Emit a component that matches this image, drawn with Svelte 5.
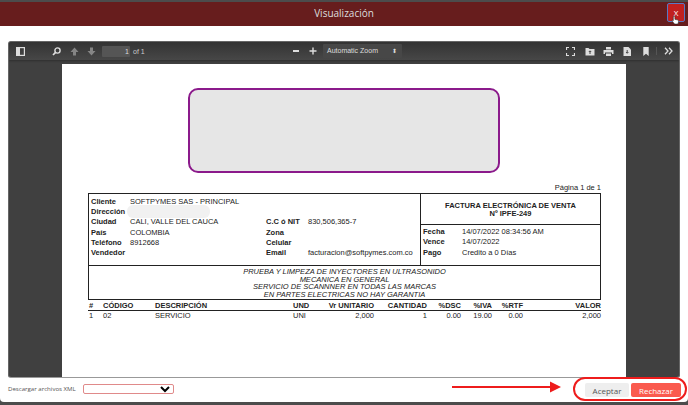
<script lang="ts">
  // Invoice preview dialog: PDF viewer with footer actions.
  const client = [
    ['Cliente', 'SOFTPYMES SAS - PRINCIPAL', '', ''],
    ['Dirección', '', '', ''],
    ['Ciudad', 'CALI, VALLE DEL CAUCA', 'C.C ó NIT', '830,506,365-7'],
    ['País', 'COLOMBIA', 'Zona', ''],
    ['Teléfono', '8912668', 'Celular', ''],
    ['Vendedor', '', 'Email', 'facturacion@softpymes.com.co'],
  ];
  const dates = [
    ['Fecha', '14/07/2022 08:34:56 AM'],
    ['Vence', '14/07/2022'],
    ['Pago', 'Credito a 0 Días'],
  ];
  const notes = [
    'PRUEBA Y LIMPEZA DE INYECTORES EN ULTRASONIDO',
    'MECANICA EN GENERAL',
    'SERVICIO DE SCANNNER EN TODAS LAS MARCAS',
    'EN PARTES ELECTRICAS NO HAY GARANTIA',
  ];
  const columns = ['#', 'CÓDIGO', 'DESCRIPCIÓN', 'UND', 'Vr UNITARIO', 'CANTIDAD', '%DSC', '%IVA', '%RTF', 'VALOR'];
  const item = ['1', '02', 'SERVICIO', 'UNI', '2,000', '1', '0.00', '19.00', '0.00', '2,000'];
</script>

<div class="dialog">
  <header class="title-bar">
    <span class="title">Visualización</span>
    <button type="button" class="close">X</button>
    <svg class="cursor" width="9" height="10" viewBox="0 0 12 14">
      <path d="M4 1.5c.8 0 1.200.5 1.200 1.200v3.400l3.600.7c1 .2 1.600.9 1.500 1.900l-.4 2.600c-.1.8-.7 1.400-1.500 1.400H5.500c-.6 0-1-.3-1.400-.8L1.400 8.600c-.4-.6.3-1.400 1-1l.5.4V2.700c0-.7.4-1.200 1.100-1.200z" fill="#fff" stroke="#222" stroke-width="0.8" />
    </svg>
  </header>

  <section class="viewer">
    <div class="toolbar">
      <svg class="icon sidebar" width="9" height="9" viewBox="0 0 9 9">
        <rect x="0.6" y="0.6" width="7.800" height="7.800" fill="none" stroke="#ddd" stroke-width="1.200" />
        <rect x="1" y="1" width="3" height="7" fill="#ddd" />
      </svg>
      <svg class="icon search" width="9" height="9" viewBox="0 0 9 9">
        <circle cx="5.500" cy="3.500" r="2.600" fill="none" stroke="#ddd" stroke-width="1.400" />
        <path d="M3.600 5.400 1 8" stroke="#ddd" stroke-width="1.700" />
      </svg>
      <svg class="icon up" width="9" height="9" viewBox="0 0 9 9"><path d="M4.500.5 8.500 5H6v3.500H3V5H.5z" fill="#858585" /></svg>
      <svg class="icon down" width="9" height="9" viewBox="0 0 9 9"><path d="M4.500 8.500 8.500 4H6V.5H3V4H.5z" fill="#858585" /></svg>
      <span class="page-input">1</span>
      <span class="page-total">of 1</span>
      <span class="zoom-minus"></span>
      <svg class="icon plus" width="8" height="8" viewBox="0 0 8 8"><path d="M4 .5v7M.5 4h7" stroke="#ddd" stroke-width="1.400" /></svg>
      <span class="zoom-select">Automatic Zoom<i>⬍</i></span>
      <svg class="icon fullscreen" width="9" height="9" viewBox="0 0 9 9">
        <path d="M.5 3V.5H3M6 .5h2.500V3M8.500 6v2.500H6M3 8.500H.5V6" fill="none" stroke="#ddd" stroke-width="1.200" />
      </svg>
      <svg class="icon open" width="10" height="9" viewBox="0 0 10 9">
        <path d="M.5 1h3l1 1h5v6.500H.5z" fill="#ddd" /><path d="M5 7V4M3.800 5 5 3.800 6.200 5" stroke="#444" fill="none" />
      </svg>
      <svg class="icon print" width="11" height="9" viewBox="0 0 11 9">
        <path d="M3 0h5v2.500H3zM.5 3h10v4H9V5.500H2V7H.5zM3 6.500h5V9H3z" fill="#ddd" />
      </svg>
      <svg class="icon save" width="8" height="9" viewBox="0 0 8 9">
        <path d="M.5 0h5L8 2.500V9H.5z" fill="#ddd" /><path d="M4.200 3v3M3 5l1.200 1.300L5.400 5" stroke="#444" fill="none" />
      </svg>
      <svg class="icon bookmark" width="6" height="9" viewBox="0 0 6 9"><path d="M.3 0h5.400v9L3 6.800.3 9z" fill="#ddd" /></svg>
      <span class="tool-sep"></span>
      <svg class="icon more" width="9" height="8" viewBox="0 0 9 8">
        <path d="M1 .8 4 4 1 7.200M5 .8 8 4 5 7.200" fill="none" stroke="#ddd" stroke-width="1.300" />
      </svg>
    </div>

    <div class="canvas">
      <article class="page">
        <div class="logo-box"></div>
        <div class="page-count">Página 1 de 1</div>

        <div class="invoice-box">
          <div class="client-grid">
            {#each client as row}
              <b>{row[0]}</b><span>{row[1]}</span><b>{row[2]}</b><span>{row[3]}</span>
            {/each}
            <span class="redacted"></span>
          </div>
          <div class="doc-side">
            <div class="doc-title">FACTURA ELECTRÓNICA DE VENTA<br />Nº IPFE-249</div>
            <div class="doc-dates">
              {#each dates as row}
                <b>{row[0]}</b><span>{row[1]}</span>
              {/each}
            </div>
          </div>
          <div class="notes">
            {#each notes as line}<div>{line}</div>{/each}
          </div>
        </div>

        <div class="items heads">
          {#each columns as col}<b>{col}</b>{/each}
        </div>
        <div class="items">
          {#each item as cell}<span>{cell}</span>{/each}
        </div>
      </article>
    </div>
  </section>

  <footer class="actions">
    <label class="xml">
      <span>Descargar archivos XML</span>
      <select aria-label="Descargar archivos XML"></select>
    </label>
    <div class="buttons">
      <button type="button" class="accept">Aceptar</button>
      <button type="button" class="reject">Rechazar</button>
    </div>
    <svg class="arrow" width="110" height="12" viewBox="0 0 110 12">
      <path d="M0 6h100" stroke="#ee1c1c" stroke-width="2" /><path d="M98 0.500 109 6 98 11.500z" fill="#ee1c1c" />
    </svg>
    <span class="ring"></span>
  </footer>
</div>

<style>
  :global(body) {
    margin: 0;
    background: #4c4c4c;
  }
  .dialog {
    display: flex;
    flex-direction: column;
    width: 688px;
    height: 400px;
    margin-top: 2px;
    overflow: hidden;
    background: #fff;
    border-radius: 0 0 4px 4px;
    font-family: "Open Sans", sans-serif;
  }
  .title-bar {
    position: relative;
    display: flex;
    align-items: center;
    justify-content: center;
    flex: none;
    height: 24px;
    background: #671d1d;
  }
  .title {
    margin-bottom: 2px;
    font-size: 10px;
    color: #ddd;
  }
  .close {
    position: absolute;
    top: 1px;
    right: 3px;
    width: 18px;
    height: 19px;
    padding: 0;
    font: 8px "Open Sans", sans-serif;
    color: #fff;
    background: #c0201f;
    border: 1px solid #5878c4;
    border-radius: 2px;
  }
  .cursor {
    position: absolute;
    top: 13px;
    right: 8px;
  }
  .viewer {
    display: flex;
    flex-direction: column;
    flex: none;
    height: 337px;
    margin: 15px 8px 0;
    overflow: hidden;
    background: #404040;
    border: 1px solid #666;
    border-bottom-color: #999;
    border-radius: 3px;
    box-sizing: border-box;
  }
  .toolbar {
    display: flex;
    align-items: center;
    flex: none;
    height: 18px;
    padding-left: 7px;
    background: linear-gradient(#333, #474747);
    box-shadow: 0 1px 2px rgba(0, 0, 0, 0.3);
    font-family: "Liberation Sans", sans-serif;
    white-space: nowrap;
    color: #ccc;
  }
  .toolbar > * {
    flex: none;
  }
  .search {
    margin-left: 27px;
  }
  .up {
    margin-left: 9px;
  }
  .down {
    margin-left: 8px;
  }
  .page-input {
    width: 28px;
    height: 11px;
    margin-left: 6px;
    padding-right: 1px;
    font-size: 7px;
    line-height: 11px;
    text-align: right;
    color: #ddd;
    background: #555;
    border-radius: 1px;
    box-sizing: border-box;
  }
  .page-total {
    width: 11px;
    margin-left: 3px;
    font-size: 7px;
  }
  .zoom-minus {
    width: 6px;
    height: 1.500px;
    margin-left: 149px;
    background: #ddd;
  }
  .plus {
    margin-left: 10px;
  }
  .zoom-select {
    display: flex;
    justify-content: space-between;
    width: 79px;
    height: 14px;
    margin-left: 6px;
    padding: 0 5px 0 4px;
    font-size: 7px;
    line-height: 14px;
    color: #ddd;
    background: #474747;
    border-radius: 1px;
    box-sizing: border-box;
  }
  .zoom-select i {
    font-style: normal;
    font-size: 6px;
  }
  .fullscreen {
    margin-left: 164px;
  }
  .open {
    margin-left: 10px;
  }
  .print {
    margin-left: 8px;
  }
  .save {
    margin-left: 9px;
  }
  .bookmark {
    margin-left: 12px;
  }
  .tool-sep {
    width: 1px;
    height: 8px;
    margin-left: 7px;
    background: #555;
  }
  .more {
    margin-left: 7px;
  }
  .canvas {
    flex: 1;
    min-height: 0;
    padding: 4px 53px 0;
    overflow: hidden;
  }
  .page {
    height: 100%;
    padding: 24px 25px 0 26px;
    background: #fff;
    font-family: "Liberation Sans", sans-serif;
    font-size: 7.500px;
    color: #222;
    box-sizing: border-box;
  }
  .logo-box {
    width: 312px;
    height: 85px;
    margin-left: 100px;
    background: #e6e6e6;
    border: 2px solid #8b1a8b;
    border-radius: 10px;
    box-sizing: border-box;
  }
  .page-count {
    margin-top: 10px;
    line-height: 10px;
    text-align: right;
  }
  .invoice-box {
    display: grid;
    grid-template-columns: 332px 1fr;
    border: 1px solid #222;
  }
  .client-grid {
    position: relative;
    display: grid;
    grid-template-columns: 39px 136px 42px 1fr;
    grid-auto-rows: 10.300px;
    align-items: center;
    height: 72px;
    padding: 2px 0 0 2px;
    white-space: nowrap;
    border-right: 1px solid #222;
    border-bottom: 1px solid #222;
    box-sizing: border-box;
  }
  .redacted {
    position: absolute;
    top: 11px;
    left: 38px;
    width: 83px;
    height: 13px;
    background: #f1f1f1;
    border-radius: 6px;
  }
  .doc-side {
    display: flex;
    flex-direction: column;
    border-bottom: 1px solid #222;
  }
  .doc-title {
    height: 31px;
    padding-top: 8px;
    font-weight: bold;
    line-height: 8px;
    text-align: center;
    border-bottom: 1px solid #222;
    box-sizing: border-box;
  }
  .doc-dates {
    display: grid;
    grid-template-columns: 39px 1fr;
    grid-auto-rows: 10.500px;
    align-items: center;
    padding: 1px 0 0 2px;
  }
  .notes {
    grid-column: 1 / -1;
    height: 33px;
    padding-top: 2px;
    font-style: italic;
    line-height: 7.500px;
    text-align: center;
    box-sizing: border-box;
  }
  .items {
    display: grid;
    grid-template-columns: 14px 52px 138px 33px 48px 53px 34px 31px 31px 1fr;
    padding-left: 1px;
    line-height: 8px;
    white-space: nowrap;
  }
  .items > :nth-child(n + 5) {
    text-align: right;
  }
  .heads {
    margin-top: 2px;
    margin-bottom: 1px;
    border-bottom: 1px solid #222;
  }
  .actions {
    position: relative;
    display: flex;
    align-items: center;
    flex: none;
    height: 22px;
    padding: 2px 7px 0 8px;
    box-sizing: border-box;
  }
  .xml {
    display: flex;
    align-items: center;
    gap: 7px;
    margin-bottom: 3px;
    font-size: 6.100px;
    color: #555;
  }
  select {
    width: 91px;
    height: 10px;
    padding: 0;
    background: #fff;
    border: 1px solid #e08a8a;
    border-radius: 2px;
    box-sizing: border-box;
  }
  .buttons {
    display: flex;
    gap: 2px;
    margin-left: auto;
  }
  .buttons button {
    height: 14px;
    padding: 0;
    font: 8px "Open Sans", sans-serif;
    border: 0;
    border-radius: 2px;
  }
  .accept {
    width: 44px;
    color: #555;
    background: #eee;
  }
  .reject {
    width: 50px;
    color: #fff;
    background: #fa5a4e;
  }
  .arrow {
    position: absolute;
    top: 3px;
    left: 452px;
  }
  .ring {
    position: absolute;
    top: -1px;
    left: 573px;
    width: 114px;
    height: 24px;
    border: 2px solid #ee1c1c;
    border-radius: 12px;
    box-sizing: border-box;
  }
</style>
